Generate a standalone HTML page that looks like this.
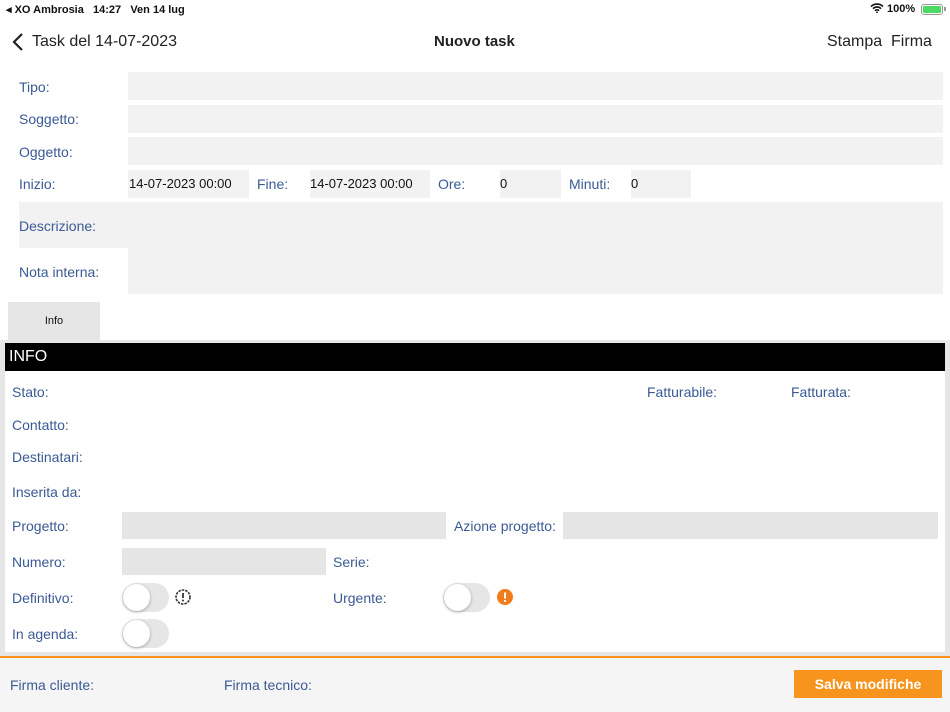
<!DOCTYPE html>
<html><head><meta charset="utf-8"><style>
*{margin:0;padding:0;box-sizing:border-box}
body{width:950px;height:712px;position:relative;background:#fff;font-family:"Liberation Sans",sans-serif;overflow:hidden}
.a{position:absolute;white-space:nowrap}
.l{color:#3b5a94;font-size:14px}
.f{background:#f2f2f2}
.g{background:#e5e5e5}
.v{font-size:13px;color:#111}
.tg{position:absolute;width:47px;height:29px;border-radius:15px;background:#e6e6e6}
.tg::after{content:"";position:absolute;left:1px;top:1px;width:27px;height:27px;border-radius:50%;background:#fff;box-shadow:0 1px 3px rgba(0,0,0,.3)}
</style></head><body>
<div class="a" style="left:6px;top:3px;font-size:11px;font-weight:bold;color:#111">◂ XO Ambrosia&nbsp;&nbsp; 14:27&nbsp;&nbsp; Ven 14 lug</div>
<div class="a" style="left:870px;top:3px;font-size:11px;font-weight:bold;color:#111">
<svg width="14" height="10" viewBox="0 0 14 10" style="vertical-align:-1px"><path d="M1 3.5a8.5 8.5 0 0 1 12 0M3 5.7a5.5 5.5 0 0 1 8 0M5 7.8a2.6 2.6 0 0 1 4 0" stroke="#111" stroke-width="1.6" fill="none"/><circle cx="7" cy="9.3" r=".9" fill="#111"/></svg> 100%</div>
<div class="a" style="left:921px;top:4px;width:22px;height:11px;border:1px solid #999;border-radius:3px;padding:1px"><div style="width:100%;height:100%;background:#4cd964;border-radius:1px"></div></div>
<div class="a" style="left:944px;top:7px;width:2px;height:4px;background:#999"></div>
<svg class="a" style="left:12px;top:33px" width="12" height="18" viewBox="0 0 12 18"><path d="M10 1L2 9l8 8" stroke="#222" stroke-width="2.2" fill="none"/></svg>
<div class="a" style="left:32px;top:33px;font-size:16px;color:#222">Task del 14-07-2023</div>
<div class="a" style="left:434px;top:33px;font-size:15px;font-weight:bold;color:#222">Nuovo task</div>
<div class="a" style="left:827px;top:33px;font-size:16px;color:#222">Stampa&nbsp; Firma</div>

<div class="a l" style="left:19px;top:79px">Tipo:</div><div class="a f" style="left:128px;top:72px;width:815px;height:28px"></div>
<div class="a l" style="left:19px;top:111px">Soggetto:</div><div class="a f" style="left:128px;top:105px;width:815px;height:28px"></div>
<div class="a l" style="left:19px;top:144px">Oggetto:</div><div class="a f" style="left:128px;top:137px;width:815px;height:28px"></div>
<div class="a l" style="left:19px;top:176px">Inizio:</div>
<div class="a f v" style="left:128px;top:170px;width:121px;height:28px;line-height:28px;padding-left:1px">14-07-2023 00:00</div>
<div class="a l" style="left:257px;top:176px">Fine:</div>
<div class="a f v" style="left:310px;top:170px;width:120px;height:28px;line-height:28px">14-07-2023 00:00</div>
<div class="a l" style="left:438px;top:176px">Ore:</div>
<div class="a f v" style="left:500px;top:170px;width:61px;height:28px;line-height:28px">0</div>
<div class="a l" style="left:569px;top:176px">Minuti:</div>
<div class="a f v" style="left:631px;top:170px;width:60px;height:28px;line-height:28px">0</div>
<div class="a f" style="left:19px;top:202px;width:924px;height:46px"></div>
<div class="a f" style="left:128px;top:248px;width:815px;height:46px"></div>
<div class="a l" style="left:19px;top:218px">Descrizione:</div>
<div class="a l" style="left:19px;top:264px">Nota interna:</div>
<div class="a" style="left:8px;top:302px;width:92px;height:38px;background:#e6e6e6;font-size:11px;text-align:center;line-height:38px;color:#111">Info</div>

<div class="a" style="left:0;top:340px;width:950px;height:316px;background:#e6e6e6"></div>
<div class="a" style="left:5px;top:343px;width:940px;height:309px;background:#fff"></div>
<div class="a" style="left:5px;top:343px;width:940px;height:28px;background:#000;color:#fff;font-size:16px;line-height:28px;padding-left:4px">INFO</div>
<div class="a l" style="left:12px;top:384px">Stato:</div>
<div class="a l" style="left:647px;top:384px">Fatturabile:</div>
<div class="a l" style="left:791px;top:384px">Fatturata:</div>
<div class="a l" style="left:12px;top:417px">Contatto:</div>
<div class="a l" style="left:12px;top:449px">Destinatari:</div>
<div class="a l" style="left:12px;top:484px">Inserita da:</div>
<div class="a l" style="left:12px;top:518px">Progetto:</div>
<div class="a g" style="left:122px;top:512px;width:324px;height:27px"></div>
<div class="a l" style="left:454px;top:518px">Azione progetto:</div>
<div class="a g" style="left:563px;top:512px;width:375px;height:27px"></div>
<div class="a l" style="left:12px;top:554px">Numero:</div>
<div class="a g" style="left:122px;top:548px;width:204px;height:27px"></div>
<div class="a l" style="left:333px;top:554px">Serie:</div>
<div class="a l" style="left:12px;top:590px">Definitivo:</div>
<div class="tg" style="left:122px;top:583px"></div>
<svg class="a" style="left:174px;top:588px" width="18" height="18" viewBox="0 0 18 18"><circle cx="9" cy="9" r="7" fill="none" stroke="#333" stroke-width="1.6" stroke-dasharray="2.5 1"/><path d="M9 5v5" stroke="#333" stroke-width="1.8"/><circle cx="9" cy="12.5" r="1" fill="#333"/></svg>
<div class="a l" style="left:333px;top:590px">Urgente:</div>
<div class="tg" style="left:443px;top:583px"></div>
<svg class="a" style="left:496px;top:588px" width="18" height="18" viewBox="0 0 18 18"><circle cx="9" cy="9" r="8" fill="#f07d1a"/><path d="M9 4.5v6" stroke="#fff" stroke-width="2"/><circle cx="9" cy="13" r="1.1" fill="#fff"/></svg>
<div class="a l" style="left:12px;top:626px">In agenda:</div>
<div class="tg" style="left:122px;top:619px"></div>

<div class="a" style="left:0;top:656px;width:950px;height:56px;background:#f5f5f5;border-top:2px solid #f7941d"></div>
<div class="a l" style="left:10px;top:677px">Firma cliente:</div>
<div class="a l" style="left:224px;top:677px">Firma tecnico:</div>
<div class="a" style="left:794px;top:670px;width:148px;height:28px;background:#f7941d;color:#fff;font-weight:bold;font-size:14px;text-align:center;line-height:28px">Salva modifiche</div>
</body></html>
